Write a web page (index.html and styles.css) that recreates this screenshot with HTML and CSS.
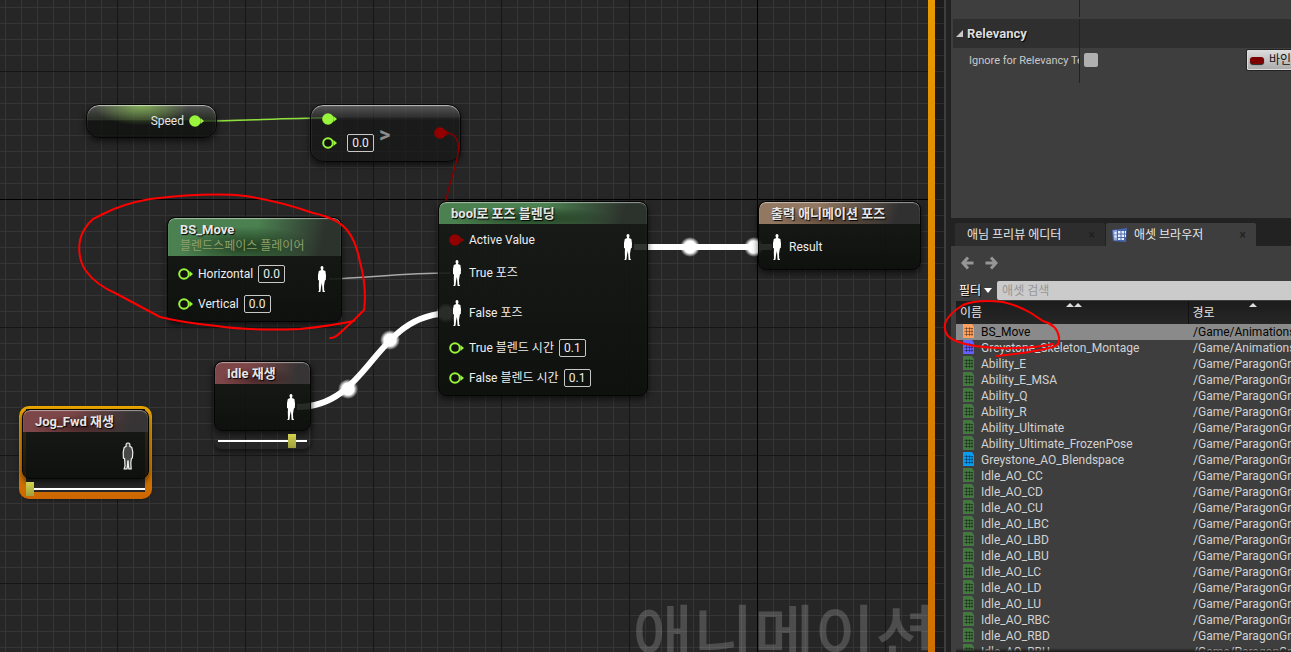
FILE: index.html
```html
<!DOCTYPE html>
<html lang="ko">
<head>
    <meta charset="UTF-8">
    <meta name="viewport" content="width=device-width, initial-scale=1.0">
    <title>AnimGraph</title>
    <link rel="stylesheet" href="styles.css">
</head>
<body>
    <svg class="symbols" aria-hidden="true">
        <symbol id="pin" viewBox="0 0 15 12">
            <circle cx="6" cy="6" r="4.8" fill="#101210" stroke="currentColor" stroke-width="2"/>
            <path d="M11.5 3 L15 6 L11.5 9 Z" fill="currentColor"/>
        </symbol>
        <symbol id="pin-on" viewBox="0 0 15 12">
            <circle cx="6" cy="6" r="5.8" fill="currentColor"/>
            <path d="M11.5 3 L15 6 L11.5 9 Z" fill="currentColor"/>
        </symbol>
        <symbol id="pose" viewBox="0 0 10 26">
            <path d="M5 0 C6.2 0 6.6 1 6.4 2.4 L6 4 L8.4 5 L9 9.5 L8.8 14 L8 14.3 L7.6 16 L7 20 L7.2 24.5 L8.2 26 L5.6 26 L5.2 20.5 L4.9 17 L4 21 L3.6 25 L3.2 26 L1.2 26 L2 24.5 L1.8 18 L2 14.5 L1 14 L1 9 L1.8 5 L4.2 4 L3.6 2.4 C3.4 1 3.8 0 5 0 Z" fill="#fff"/>
        </symbol>
        <symbol id="pose-off" viewBox="0 0 12 28">
            <path d="M6 1 C7.8 1 8.2 2.4 7.8 4.4 L9.8 5.4 L10.8 10 L10.4 16 L9.4 16.6 L8.8 21 L9.2 26.8 L6.8 26.8 L6 19 L5 26.8 L2.2 26.8 L3 24 L2.6 16.6 L1.4 16 L1.2 10 L2.2 5.4 L4.2 4.4 C3.8 2.4 4.2 1 6 1 Z" fill="#484848" stroke="#eee" stroke-width="1.2"/>
            <path d="M6 18 L5.8 26" stroke="#eee"/>
        </symbol>
        <symbol id="sheet" viewBox="0 0 11 14">
            <path d="M0 0 H9 L11 3 V14 H0 Z" fill="currentColor"/>
            <path d="M3.5 3 V12 M6.5 3 V12 M9 4 V12 M1.5 4.5 H10 M1.5 7.5 H10 M1.5 10.5 H10" stroke="#000" stroke-opacity=".36" fill="none"/>
        </symbol>
    </svg>

    <div class="editor">
        <main class="graph">
            <div class="watermark">애니메이션</div>

            <svg class="overlay wires" aria-hidden="true">
                <defs>
                    <radialGradient id="bead">
                        <stop offset=".6" stop-color="#fff"/>
                        <stop offset="1" stop-color="#fff" stop-opacity="0"/>
                    </radialGradient>
                </defs>
                <path d="M203 121 C243 121 283 118 324 118" stroke="#8fe03c" stroke-width="1.5"/>
                <path d="M329 279 C370 278 400 273 450 273" stroke="#a8a8a8" stroke-width="1.5"/>
                <g stroke="#fff" stroke-width="6">
                    <path d="M297 407 C372 407 372 313 452 313"/>
                    <path d="M634 247 H772"/>
                </g>
                <g fill="url(#bead)">
                    <circle cx="348" cy="389" r="10"/>
                    <circle cx="390" cy="340" r="10"/>
                    <circle cx="446" cy="313" r="10"/>
                    <circle cx="690" cy="247" r="10"/>
                    <circle cx="754" cy="247" r="10"/>
                </g>
            </svg>

            <section class="node compact speed">
                <span>Speed</span>
                <svg class="pin"><use href="#pin-on"/></svg>
            </section>

            <section class="node compact compare">
                <div class="inputs">
                    <svg class="pin"><use href="#pin-on"/></svg>
                    <label class="row">
                        <svg class="pin"><use href="#pin"/></svg>
                        <input class="value" type="text" value="0.0" aria-label="B">
                    </label>
                </div>
                <span class="operator">&gt;</span>
                <svg class="pin bool"><use href="#pin-on"/></svg>
            </section>

            <svg class="overlay wires" aria-hidden="true">
                <path d="M446 133 C456 133 460 142 458 153 C456 168 449 183 446 201" stroke="#840000" stroke-width="1.5"/>
            </svg>

            <section class="node move">
                <header class="green">
                    <h2>BS_Move</h2>
                    <p>블렌드스페이스 플레이어</p>
                </header>
                <div class="body">
                    <div class="inputs">
                        <label class="row"><svg class="pin"><use href="#pin"/></svg>Horizontal <input class="value" type="text" value="0.0"></label>
                        <label class="row"><svg class="pin"><use href="#pin"/></svg>Vertical <input class="value" type="text" value="0.0"></label>
                    </div>
                    <svg class="pose"><use href="#pose"/></svg>
                </div>
            </section>

            <section class="node blend">
                <header class="green"><h2>bool로 포즈 블렌딩</h2></header>
                <div class="body">
                    <div class="inputs">
                        <div class="row short"><svg class="pin bool"><use href="#pin-on"/></svg>Active Value</div>
                        <div class="row tall"><svg class="pose"><use href="#pose"/></svg>True 포즈</div>
                        <div class="row tall"><svg class="pose"><use href="#pose"/></svg>False 포즈</div>
                        <label class="row"><svg class="pin"><use href="#pin"/></svg>True 블렌드 시간 <input class="value" type="text" value="0.1"></label>
                        <label class="row"><svg class="pin"><use href="#pin"/></svg>False 블렌드 시간 <input class="value" type="text" value="0.1"></label>
                    </div>
                    <svg class="pose"><use href="#pose"/></svg>
                </div>
            </section>

            <section class="node result">
                <header class="tan"><h2>출력 애니메이션 포즈</h2></header>
                <div class="body">
                    <div class="row"><svg class="pose"><use href="#pose"/></svg>Result</div>
                </div>
            </section>

            <div class="player idle">
                <section class="node">
                    <header class="red"><h2>Idle 재생</h2></header>
                    <div class="body"><svg class="pose"><use href="#pose"/></svg></div>
                </section>
                <input class="timeline" type="range" min="0" max="100" value="86" aria-label="Idle">
            </div>

            <div class="player jog selected">
                <section class="node">
                    <header class="red"><h2>Jog_Fwd 재생</h2></header>
                    <div class="body"><svg class="pose off"><use href="#pose-off"/></svg></div>
                </section>
                <input class="timeline" type="range" min="0" max="100" value="0" aria-label="Jog_Fwd">
            </div>

            <svg class="overlay marker" aria-hidden="true">
                <path d="M330 338 Q335 338 340 333 L354 320 L364 310 Q367 288 360 262 Q356 241 347 230 Q337 218 313 213 Q280 201 245 196 Q210 192 150 199 Q122 204 103 214 L93 219 Q83 228 80 240 Q77 258 86 271 Q96 285 117 294 L160 317 Q185 323 217 326 Q250 331 300 329 Q330 326 354 321"/>
            </svg>
        </main>

        <div class="frame-edge"></div>
        <div class="gutter"></div>

        <aside class="side">
            <section class="details">
                <div class="spacer"></div>
                <button class="category" type="button">
                    <svg class="fold" viewBox="0 0 7 7"><path d="M7 0 V7 H0 Z" fill="#c8c8c8"/></svg>Relevancy
                </button>
                <div class="property">
                    <label for="ignore">Ignore for Relevancy Test</label>
                    <div class="setting">
                        <input id="ignore" type="checkbox">
                        <button class="bind" type="button"><i></i>바인드</button>
                    </div>
                </div>
            </section>

            <section class="browser">
                <nav class="tabs">
                    <div class="tab"><button type="button">애님 프리뷰 에디터</button><button class="close" type="button" aria-label="닫기">×</button></div>
                    <div class="tab active">
                        <svg class="tab-icon" viewBox="0 0 16 14">
                            <path d="M0 2 L15 0 L14 14 L1 13 Z" fill="#4766b0"/>
                            <path d="M1 2.5 L5 2 V12.5 L2 12 Z" fill="#8fa9e0"/>
                            <path d="M6 3 H8.5 V5.5 H6 Z M9.5 3 H12 V5.5 H9.5 Z M6 6.5 H8.5 V9 H6 Z M9.5 6.5 H12 V9 H9.5 Z M6 10 H8.5 V12 H6 Z M9.5 10 H12 V12 H9.5 Z M12.8 3 H14 V5.5 H12.8 Z M12.8 6.5 H14 V9 H12.8 Z M2.5 4 H4.5 V6 H2.5 Z M2.5 7.5 H4.5 V9.5 H2.5 Z" fill="#e8eefc"/>
                        </svg>
                        <button type="button">애셋 브라우저</button><button class="close" type="button" aria-label="닫기">×</button>
                    </div>
                </nav>
                <div class="history">
                    <button type="button" aria-label="뒤로"><svg viewBox="0 0 13 14"><path d="M7 1.5 L2 7 L7 12.5 M2 7 H12.5"/></svg></button>
                    <button type="button" aria-label="앞으로"><svg viewBox="0 0 13 14"><path d="M6 1.5 L11 7 L6 12.5 M11 7 H.5"/></svg></button>
                </div>
                <div class="search">
                    <button type="button">필터<svg viewBox="0 0 8 5"><path d="M0 0 H8 L4 5 Z" fill="#fff"/></svg></button>
                    <input type="text" placeholder="애셋 검색" aria-label="애셋 검색">
                </div>
                <div class="list">
                    <table>
                        <thead>
                            <tr>
                                <th><svg class="sort" viewBox="0 0 16 4"><path d="M0 4 L4 0 L8 4 L12 0 L16 4 Z"/></svg>이름</th>
                                <th><svg class="sort" viewBox="0 0 16 4"><path d="M4 4 L8 0 L12 4 Z"/></svg>경로</th>
                            </tr>
                        </thead>
                        <tbody>
                            <tr class="selected-row"><td><svg class="blend-space"><use href="#sheet"/></svg>BS_Move</td><td>/Game/Animations</td></tr>
                            <tr><td><svg class="montage"><use href="#sheet"/></svg>Greystone_Skeleton_Montage</td><td>/Game/Animations</td></tr>
                            <tr><td><svg><use href="#sheet"/></svg>Ability_E</td><td>/Game/ParagonGreystone</td></tr>
                            <tr><td><svg><use href="#sheet"/></svg>Ability_E_MSA</td><td>/Game/ParagonGreystone</td></tr>
                            <tr><td><svg><use href="#sheet"/></svg>Ability_Q</td><td>/Game/ParagonGreystone</td></tr>
                            <tr><td><svg><use href="#sheet"/></svg>Ability_R</td><td>/Game/ParagonGreystone</td></tr>
                            <tr><td><svg><use href="#sheet"/></svg>Ability_Ultimate</td><td>/Game/ParagonGreystone</td></tr>
                            <tr><td><svg><use href="#sheet"/></svg>Ability_Ultimate_FrozenPose</td><td>/Game/ParagonGreystone</td></tr>
                            <tr><td><svg class="aim"><use href="#sheet"/></svg>Greystone_AO_Blendspace</td><td>/Game/ParagonGreystone</td></tr>
                            <tr><td><svg><use href="#sheet"/></svg>Idle_AO_CC</td><td>/Game/ParagonGreystone</td></tr>
                            <tr><td><svg><use href="#sheet"/></svg>Idle_AO_CD</td><td>/Game/ParagonGreystone</td></tr>
                            <tr><td><svg><use href="#sheet"/></svg>Idle_AO_CU</td><td>/Game/ParagonGreystone</td></tr>
                            <tr><td><svg><use href="#sheet"/></svg>Idle_AO_LBC</td><td>/Game/ParagonGreystone</td></tr>
                            <tr><td><svg><use href="#sheet"/></svg>Idle_AO_LBD</td><td>/Game/ParagonGreystone</td></tr>
                            <tr><td><svg><use href="#sheet"/></svg>Idle_AO_LBU</td><td>/Game/ParagonGreystone</td></tr>
                            <tr><td><svg><use href="#sheet"/></svg>Idle_AO_LC</td><td>/Game/ParagonGreystone</td></tr>
                            <tr><td><svg><use href="#sheet"/></svg>Idle_AO_LD</td><td>/Game/ParagonGreystone</td></tr>
                            <tr><td><svg><use href="#sheet"/></svg>Idle_AO_LU</td><td>/Game/ParagonGreystone</td></tr>
                            <tr><td><svg><use href="#sheet"/></svg>Idle_AO_RBC</td><td>/Game/ParagonGreystone</td></tr>
                            <tr><td><svg><use href="#sheet"/></svg>Idle_AO_RBD</td><td>/Game/ParagonGreystone</td></tr>
                            <tr><td><svg><use href="#sheet"/></svg>Idle_AO_RBU</td><td>/Game/ParagonGreystone</td></tr>
                        </tbody>
                    </table>
                </div>
            </section>

            <svg class="overlay marker" aria-hidden="true">
                <path d="M102 344 Q80 349 46 348 Q20 347 5 341 Q-8 336 -6 324 Q-4 315 12 305 Q26 299 52 302 Q66 305 80 313 L92 321 Q106 325 108 337 Q109 345 102 347 Q85 352 46 356"/>
            </svg>
        </aside>
    </div>
</body>
</html>
```

FILE: styles.css
```css
* {
    box-sizing: border-box;
}

body {
    margin: 0;
    background: #222;
    color: #e6e6e6;
    font-family: Roboto, "Noto Sans CJK KR", sans-serif;
    font-size: 12px;
    line-height: 16px;
    overflow: hidden;
}

button, input {
    margin: 0;
    padding: 0;
    border: 0;
    background: none;
    color: inherit;
    font: inherit;
}

h2, p {
    margin: 0;
}

svg {
    flex: none;
}

.symbols {
    position: absolute;
    width: 0;
    height: 0;
}

.editor {
    display: flex;
    height: 100vh;
}

.overlay {
    position: absolute;
    top: 0;
    left: 0;
    width: 100%;
    height: 100%;
    overflow: visible;
    fill: none;
    pointer-events: none;
}
.marker {
    stroke: #f00;
    stroke-width: 2;
    stroke-linecap: round;
}

/* graph canvas: 16px cells, a darker line every 8 cells, black axes */
.graph {
    position: relative;
    flex: 1;
    min-width: 0;
    overflow: hidden;
    background-color: #262626;
    background-image:
        linear-gradient(#000, #000),
        linear-gradient(#000, #000),
        linear-gradient(90deg, #161616 1px, transparent 1px),
        linear-gradient(#161616 1px, transparent 1px),
        linear-gradient(90deg, #353535 1px, transparent 1px),
        linear-gradient(#353535 1px, transparent 1px);
    background-size: 100% 1px, 1px 100%, 128px 128px, 128px 128px, 16px 16px, 16px 16px;
    background-position: 0 199px, 757px 0, 117px 71px, 117px 71px, 5px 7px, 5px 7px;
    background-repeat: no-repeat, no-repeat, repeat, repeat, repeat, repeat;
}
.watermark {
    position: absolute;
    right: -8px;
    bottom: -26px;
    color: rgba(255, 255, 255, 0.18);
    font-size: 66px;
    font-weight: 500;
    line-height: 80px;
    white-space: nowrap;
}
.frame-edge {
    flex: 0 0 7px;
    background: linear-gradient(#e89a00, #d07000);
}
.gutter {
    flex: 0 0 16px;
    background-color: #222;
    background-image:
        linear-gradient(90deg, transparent 9px, #3e3e3e 9px, #3e3e3e 11px, #222 11px),
        linear-gradient(#2c2c2c 1px, #1c1c1c 1px);
    background-size: 100% 100%, 16px 16px;
    background-position: 0 0, 0 7px;
}

/* nodes */
.node {
    border: 1px solid #050505;
    border-radius: 8px;
    background: linear-gradient(rgba(22, 25, 22, 0.86), rgba(12, 15, 12, 0.92));
    box-shadow: 0 3px 6px rgba(0, 0, 0, 0.6);
    overflow: hidden;
}
.speed, .compare, .move, .blend, .result, .player {
    position: absolute;
}
.node header {
    padding: 3px 12px 2px;
    border-radius: 7px 7px 0 0;
    box-shadow: inset 0 1px 1px rgba(255, 255, 255, 0.5);
    white-space: nowrap;
}
.node h2 {
    color: #e6e6e6;
    font-size: 13px;
    font-weight: bold;
    line-height: 17px;
    text-shadow: 1px 1px 1px #000;
}
.node p {
    color: #8f9f68;
    line-height: 16px;
}
.green {
    background: radial-gradient(ellipse at 45% 75%, rgba(20, 45, 20, 0.8), transparent 50%), linear-gradient(105deg, #4b8050 50%, #2c322c 88%);
}
.tan {
    background: radial-gradient(ellipse at 45% 75%, rgba(45, 30, 20, 0.6), transparent 50%), linear-gradient(105deg, #937861 35%, #303030 85%);
}
.red {
    background: radial-gradient(ellipse at 45% 75%, rgba(40, 15, 15, 0.6), transparent 50%), linear-gradient(105deg, #7d4648 35%, #363434 85%);
}
.body {
    display: flex;
    justify-content: space-between;
}
.inputs {
    display: flex;
    flex-direction: column;
}
.row {
    display: flex;
    align-items: center;
    gap: 5px;
    height: 30px;
    color: #eee;
    white-space: nowrap;
}
.row.short {
    height: 26px;
}
.row.tall {
    height: 40px;
}
.row .pose {
    margin: 0 2px 0 3px;
}
.pin {
    width: 15px;
    height: 12px;
    color: #98f53c;
}
.bool {
    color: #920000;
}
.pose {
    width: 10px;
    height: 26px;
}
.pose.off {
    width: 12px;
    height: 28px;
}
.value {
    width: 27px;
    height: 18px;
    border: 1px solid #c8c8c8;
    border-radius: 2px;
    text-align: center;
}

.compact {
    display: flex;
    border-radius: 13px;
    box-shadow: inset 0 1px 1px rgba(255, 255, 255, 0.6), 0 3px 6px rgba(0, 0, 0, 0.6);
}
.speed {
    top: 104px;
    left: 86px;
    width: 131px;
    height: 34px;
    align-items: center;
    justify-content: flex-end;
    gap: 5px;
    padding-right: 12px;
    background:
        radial-gradient(ellipse at 42% 0, rgba(150, 210, 90, 0.7), transparent 45%),
        linear-gradient(rgba(110, 110, 110, 0.6), rgba(40, 50, 35, 0.6) 45%, rgba(12, 14, 12, 0.7) 50%);
}
.compare {
    top: 104px;
    left: 310px;
    width: 151px;
    height: 58px;
    padding: 8px 11px 0;
    background: linear-gradient(rgba(120, 120, 120, 0.6), rgba(50, 50, 50, 0.6) 22%, rgba(20, 22, 20, 0.7) 25%);
}
.compare .row {
    gap: 10px;
    height: 40px;
}
.operator {
    padding: 14px 0 0 5px;
    color: #8c8c8c;
    font-size: 22px;
    font-weight: bold;
}
.compare > .pin {
    margin: 14px 0 0 auto;
}

.move {
    top: 217px;
    left: 167px;
    width: 175px;
}
.move .body {
    padding: 3px 14px 2px 10px;
}
.move .body > .pose {
    margin-top: 7px;
}
.blend {
    top: 201px;
    left: 438px;
    width: 210px;
}
.blend .body {
    padding: 3px 14px 2px 10px;
}
.blend .body > .pose {
    margin-top: 7px;
}
.result {
    top: 201px;
    left: 758px;
    width: 163px;
}
.result .body {
    padding: 8px 10px 7px;
}

.player {
    padding-bottom: 1px;
    border-radius: 8px;
    box-shadow: 0 3px 5px rgba(0, 0, 0, 0.5);
}
.player .body {
    justify-content: flex-end;
    padding: 10px 14px;
}
.player .off {
    margin-bottom: -2px;
}
.idle {
    top: 361px;
    left: 214px;
    width: 97px;
}
.jog {
    top: 409px;
    left: 22px;
    width: 127px;
}
.selected {
    z-index: 0;
    padding: 0;
    background: linear-gradient(#262626, #262626) center top / calc(100% - 8px) calc(100% - 5px) no-repeat;
}
.selected::before {
    content: "";
    position: absolute;
    z-index: -2;
    inset: -3px;
    border-radius: 10px;
    background: linear-gradient(#f0aa00, #cc6600);
}
.selected::after {
    content: "";
    position: absolute;
    z-index: -1;
    inset: 0 4px 4px;
    background: #262626;
}
.timeline {
    display: block;
    width: calc(100% - 8px);
    height: 14px;
    margin: 3px 4px 0;
    appearance: none;
    background: linear-gradient(#fff, #fff) center / 100% 2px no-repeat;
}
.timeline::-webkit-slider-thumb {
    appearance: none;
    width: 8px;
    height: 14px;
    background: linear-gradient(#d2d250, #a0a03c);
}

/* right side */
.side {
    position: relative;
    display: flex;
    flex-direction: column;
    flex: 0 0 340px;
    min-width: 0;
}
.side button {
    white-space: nowrap;
}
.details {
    flex: 0 0 218px;
    overflow: hidden;
    background: #3e3e3e;
}
.spacer {
    width: 129px;
    height: 17px;
    margin-bottom: 2px;
    border-right: 1px solid #222;
}
.category {
    display: flex;
    align-items: center;
    gap: 4px;
    width: calc(100% - 2px);
    height: 29px;
    margin-left: 2px;
    padding-left: 3px;
    background: linear-gradient(#222, #222) 126px 0 / 1px 100% no-repeat #2f2f2f;
    color: #ddd;
    font-size: 13px;
    font-weight: bold;
    text-shadow: 1px 1px 1px #000;
}
.fold {
    width: 7px;
    height: 7px;
}
.property {
    display: flex;
    height: 35px;
}
.property label {
    flex: 0 0 129px;
    padding: 5px 0 0 18px;
    border-right: 1px solid #222;
    overflow: hidden;
    color: #c8c8c8;
    font-size: 11px;
    white-space: nowrap;
}
.setting {
    display: flex;
    flex: 1;
    align-items: flex-start;
    justify-content: space-between;
    margin-right: -27px;
    padding: 1px 0 0 4px;
}
.setting input {
    width: 14px;
    height: 14px;
    margin-top: 4px;
    appearance: none;
    border-radius: 2px;
    background: #b0b0b0;
}
.bind {
    display: flex;
    align-items: center;
    gap: 5px;
    width: 72px;
    height: 22px;
    padding-left: 3px;
    border: 1px solid #222;
    border-radius: 2px;
    background: linear-gradient(#ddd, #aaa);
    box-shadow: inset 0 0 0 1px #ddd;
    color: #111;
}
.bind i {
    width: 14px;
    height: 7px;
    border-radius: 3px;
    background: #7c0000;
    box-shadow: 0 1px 1px #222;
}

.browser {
    display: flex;
    flex: 1;
    flex-direction: column;
    min-height: 0;
    background: #3e3e3e;
}
.tabs {
    display: flex;
    gap: 1px;
    padding: 5px 4px 0;
    background: #222;
}
.tab {
    display: flex;
    flex: 0 0 150px;
    align-items: center;
    height: 23px;
    padding: 0 10px 0 12px;
    border-radius: 2px 2px 0 0;
    background: #2d2d2d;
    text-shadow: 1px 1px 1px #000;
}
.tab.active {
    gap: 6px;
    padding-left: 6px;
    background: #3e3e3e;
}
.tab-icon {
    width: 16px;
    height: 14px;
}
.close {
    margin-left: auto;
    color: #1c1c1c;
    text-shadow: none;
}
.history {
    display: flex;
    gap: 11px;
    padding: 10px 10px 11px;
}
.history svg {
    display: block;
    width: 13px;
    height: 14px;
    fill: none;
    stroke: #969696;
    stroke-width: 3;
}
.search {
    display: flex;
    align-items: center;
    gap: 5px;
    padding-left: 8px;
}
.search button {
    display: flex;
    align-items: center;
    gap: 3px;
    color: #fff;
    text-shadow: 1px 1px 1px #000;
}
.search button svg {
    width: 8px;
    height: 5px;
}
.search input {
    flex: 1;
    min-width: 0;
    height: 19px;
    padding-left: 5px;
    border-radius: 2px 0 0 2px;
    background: #cbcbcb;
    color: #222;
}
.search input::placeholder {
    color: #969696;
}
.list {
    position: relative;
    flex: 1;
    min-height: 0;
    margin: 1px 0 0 5px;
    overflow: hidden;
}
.list::after {
    content: "";
    position: absolute;
    right: 0;
    bottom: 0;
    left: 0;
    height: 4px;
    background: linear-gradient(transparent, #1c1c1c);
}
.list table {
    width: 100%;
    border-collapse: collapse;
    table-layout: fixed;
}
.list th {
    position: relative;
    height: 23px;
    padding: 0 4px;
    background: linear-gradient(#1c1c1c, #262626);
    font-weight: normal;
    text-align: left;
}
.list th:first-child {
    width: 232px;
}
.list th + th {
    border-left: 1px solid #111;
}
.sort {
    position: absolute;
    top: 2px;
    left: calc(50% - 6px);
    width: 16px;
    height: 4px;
    fill: #ddd;
}
.list th + th .sort {
    left: 56px;
}
.list td {
    height: 16px;
    padding: 0 0 0 5px;
    overflow: hidden;
    color: #d2d2d2;
    line-height: 16px;
    white-space: nowrap;
}
.list td:first-child {
    padding-left: 7px;
}
.list td svg {
    width: 11px;
    height: 14px;
    margin-right: 7px;
    color: #457840;
    vertical-align: top;
}
.list td .blend-space {
    color: #ffa05f;
}
.list td .montage {
    color: #645fff;
}
.list td .aim {
    color: #0a9bf0;
}
.list .selected-row td {
    background: #8a8a8a;
    color: #050505;
}
```
